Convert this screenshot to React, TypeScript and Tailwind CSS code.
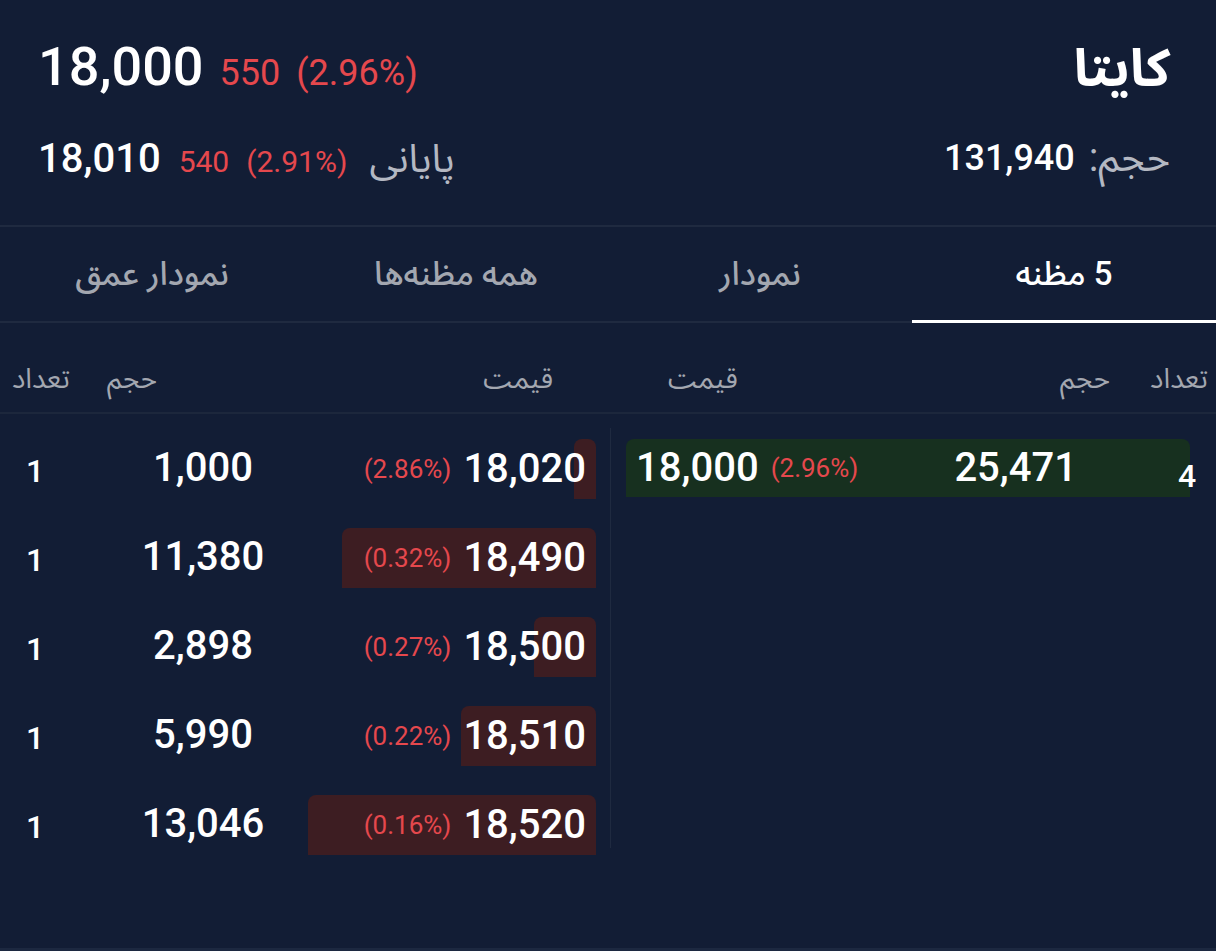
const sells = [
  { count: 1, volume: "1,000", price: "18,020", pct: "(2.86%)", bar: 22 },
  { count: 1, volume: "11,380", price: "18,490", pct: "(0.32%)", bar: 254 },
  { count: 1, volume: "2,898", price: "18,500", pct: "(0.27%)", bar: 62 },
  { count: 1, volume: "5,990", price: "18,510", pct: "(0.22%)", bar: 135 },
  { count: 1, volume: "13,046", price: "18,520", pct: "(0.16%)", bar: 288 },
];

const tabs = ["5 مظنه", "نمودار", "همه مظنه‌ها", "نمودار عمق"];

export default function App() {
  return (
    <div
      dir="rtl"
      className="h-[951px] w-[1216px] overflow-hidden bg-[#121d35] text-white flex flex-col"
      style={{ fontFamily: 'Roboto, "Noto Sans Arabic", "DejaVu Sans", sans-serif' }}
    >
      {/* header */}
      <div className="h-[225px] flex justify-between pr-[46px] pl-[38px] pt-[26px]">
        <div className="flex flex-col items-start pt-[8px]">
          <div className="text-[52px] font-bold leading-[70px] h-[70px]">کایتا</div>
          <div className="flex items-center gap-[14px] mt-[29px] h-[50px]">
            <span className="text-[40px] text-[#b4b8c2]">حجم:</span>
            <span dir="ltr" className="text-[36px] font-medium">131,940</span>
          </div>
        </div>
        <div className="flex flex-col items-start" dir="ltr">
          <div className="flex items-baseline h-[70px]">
            <span className="text-[54px] font-medium mr-[16px]">18,000</span>
            <span className="text-[36px] text-[#e5484d] mr-[16px]">550</span>
            <span className="text-[36px] text-[#e5484d]">(2.96%)</span>
          </div>
          <div className="flex items-baseline h-[50px] mt-[33px]">
            <span className="text-[40px] font-medium mr-[18px]">18,010</span>
            <span className="text-[30px] text-[#e5484d] mr-[17px]">540</span>
            <span className="text-[30px] text-[#e5484d] mr-[22px]">(2.91%)</span>
            <span className="text-[39px] text-[#b4b8c2]">پایانی</span>
          </div>
        </div>
      </div>

      {/* tabs */}
      <div className="h-[98px] border-t-2 border-b-2 border-[#1f2a40] flex">
        {tabs.map((t, i) => (
          <div
            key={t}
            className={
              "flex-1 flex items-center justify-center text-[33px] font-medium " +
              (i === 0 ? "text-white border-b-[3px] border-white -mb-[2px]" : "text-[#a3a7b0]")
            }
          >
            {t}
          </div>
        ))}
      </div>

      {/* column headers */}
      <div className="h-[91px] border-b-2 border-[#1c273c] flex items-center pt-[22px] text-[28px] text-[#a3a7b0]">
        <div className="w-[606px] flex items-center">
          <span className="w-[86px] pr-[8px]">تعداد</span>
          <span className="w-[200px] pr-[20px]">حجم</span>
          <span className="flex-1 text-left pl-[58px]">قیمت</span>
        </div>
        <div className="w-[610px] flex items-center">
          <span className="mr-[57px]">قیمت</span>
          <span className="flex-1" />
          <span>حجم</span>
          <span className="w-[37px]" />
          <span className="ml-[12px]">تعداد</span>
        </div>
      </div>

      {/* order book */}
      <div className="flex pt-[14px]">
        {/* buy side */}
        <div className="w-[605px] flex pt-[11px] self-start">
          <div className="w-[26px] flex justify-end pt-[8px]">
            <span className="relative z-10 text-[32px] font-medium -ml-[12px] leading-[58px]">4</span>
          </div>
          <div className="w-[564px] h-[58px] bg-[#17301f] rounded-t-lg flex items-center">
            <span dir="ltr" className="text-[40px] font-medium pr-[113px]">25,471</span>
            <span className="flex-1" />
            <span dir="ltr" className="text-[26px] text-[#e5484d] ml-[12px]">(2.96%)</span>
            <span dir="ltr" className="text-[40px] font-medium pl-[10px]">18,000</span>
          </div>
        </div>
        <div className="w-px h-[420px] bg-[#1f2a40]" />
        {/* sell side */}
        <div className="w-[610px] flex flex-col gap-[31px] pt-[11px]">
          {sells.map((r) => (
            <div key={r.price} className="flex h-[58px] items-center">
              <div className="w-[304px] h-full pr-[14px] grid">
                <div
                  className="col-start-1 row-start-1 justify-self-start h-full bg-[#3d1d22] rounded-t-lg"
                  style={{ width: r.bar }}
                />
                <div className="col-start-1 row-start-1 flex items-center pr-[10px]">
                  <span dir="ltr" className="text-[40px] font-medium">{r.price}</span>
                  <span dir="ltr" className="text-[26px] text-[#e5484d] mr-[12px]">{r.pct}</span>
                </div>
              </div>
              <div className="w-[206px] flex justify-center">
                <span dir="ltr" className="text-[40px] font-medium">{r.volume}</span>
              </div>
              <div className="flex-1 text-left pl-[26px] pt-[6px]">
                <span className="text-[32px] font-medium">{r.count}</span>
              </div>
            </div>
          ))}
        </div>
      </div>

      <div className="flex-1" />
      <div className="h-[3px] bg-[#1c2840]" />
    </div>
  );
}
